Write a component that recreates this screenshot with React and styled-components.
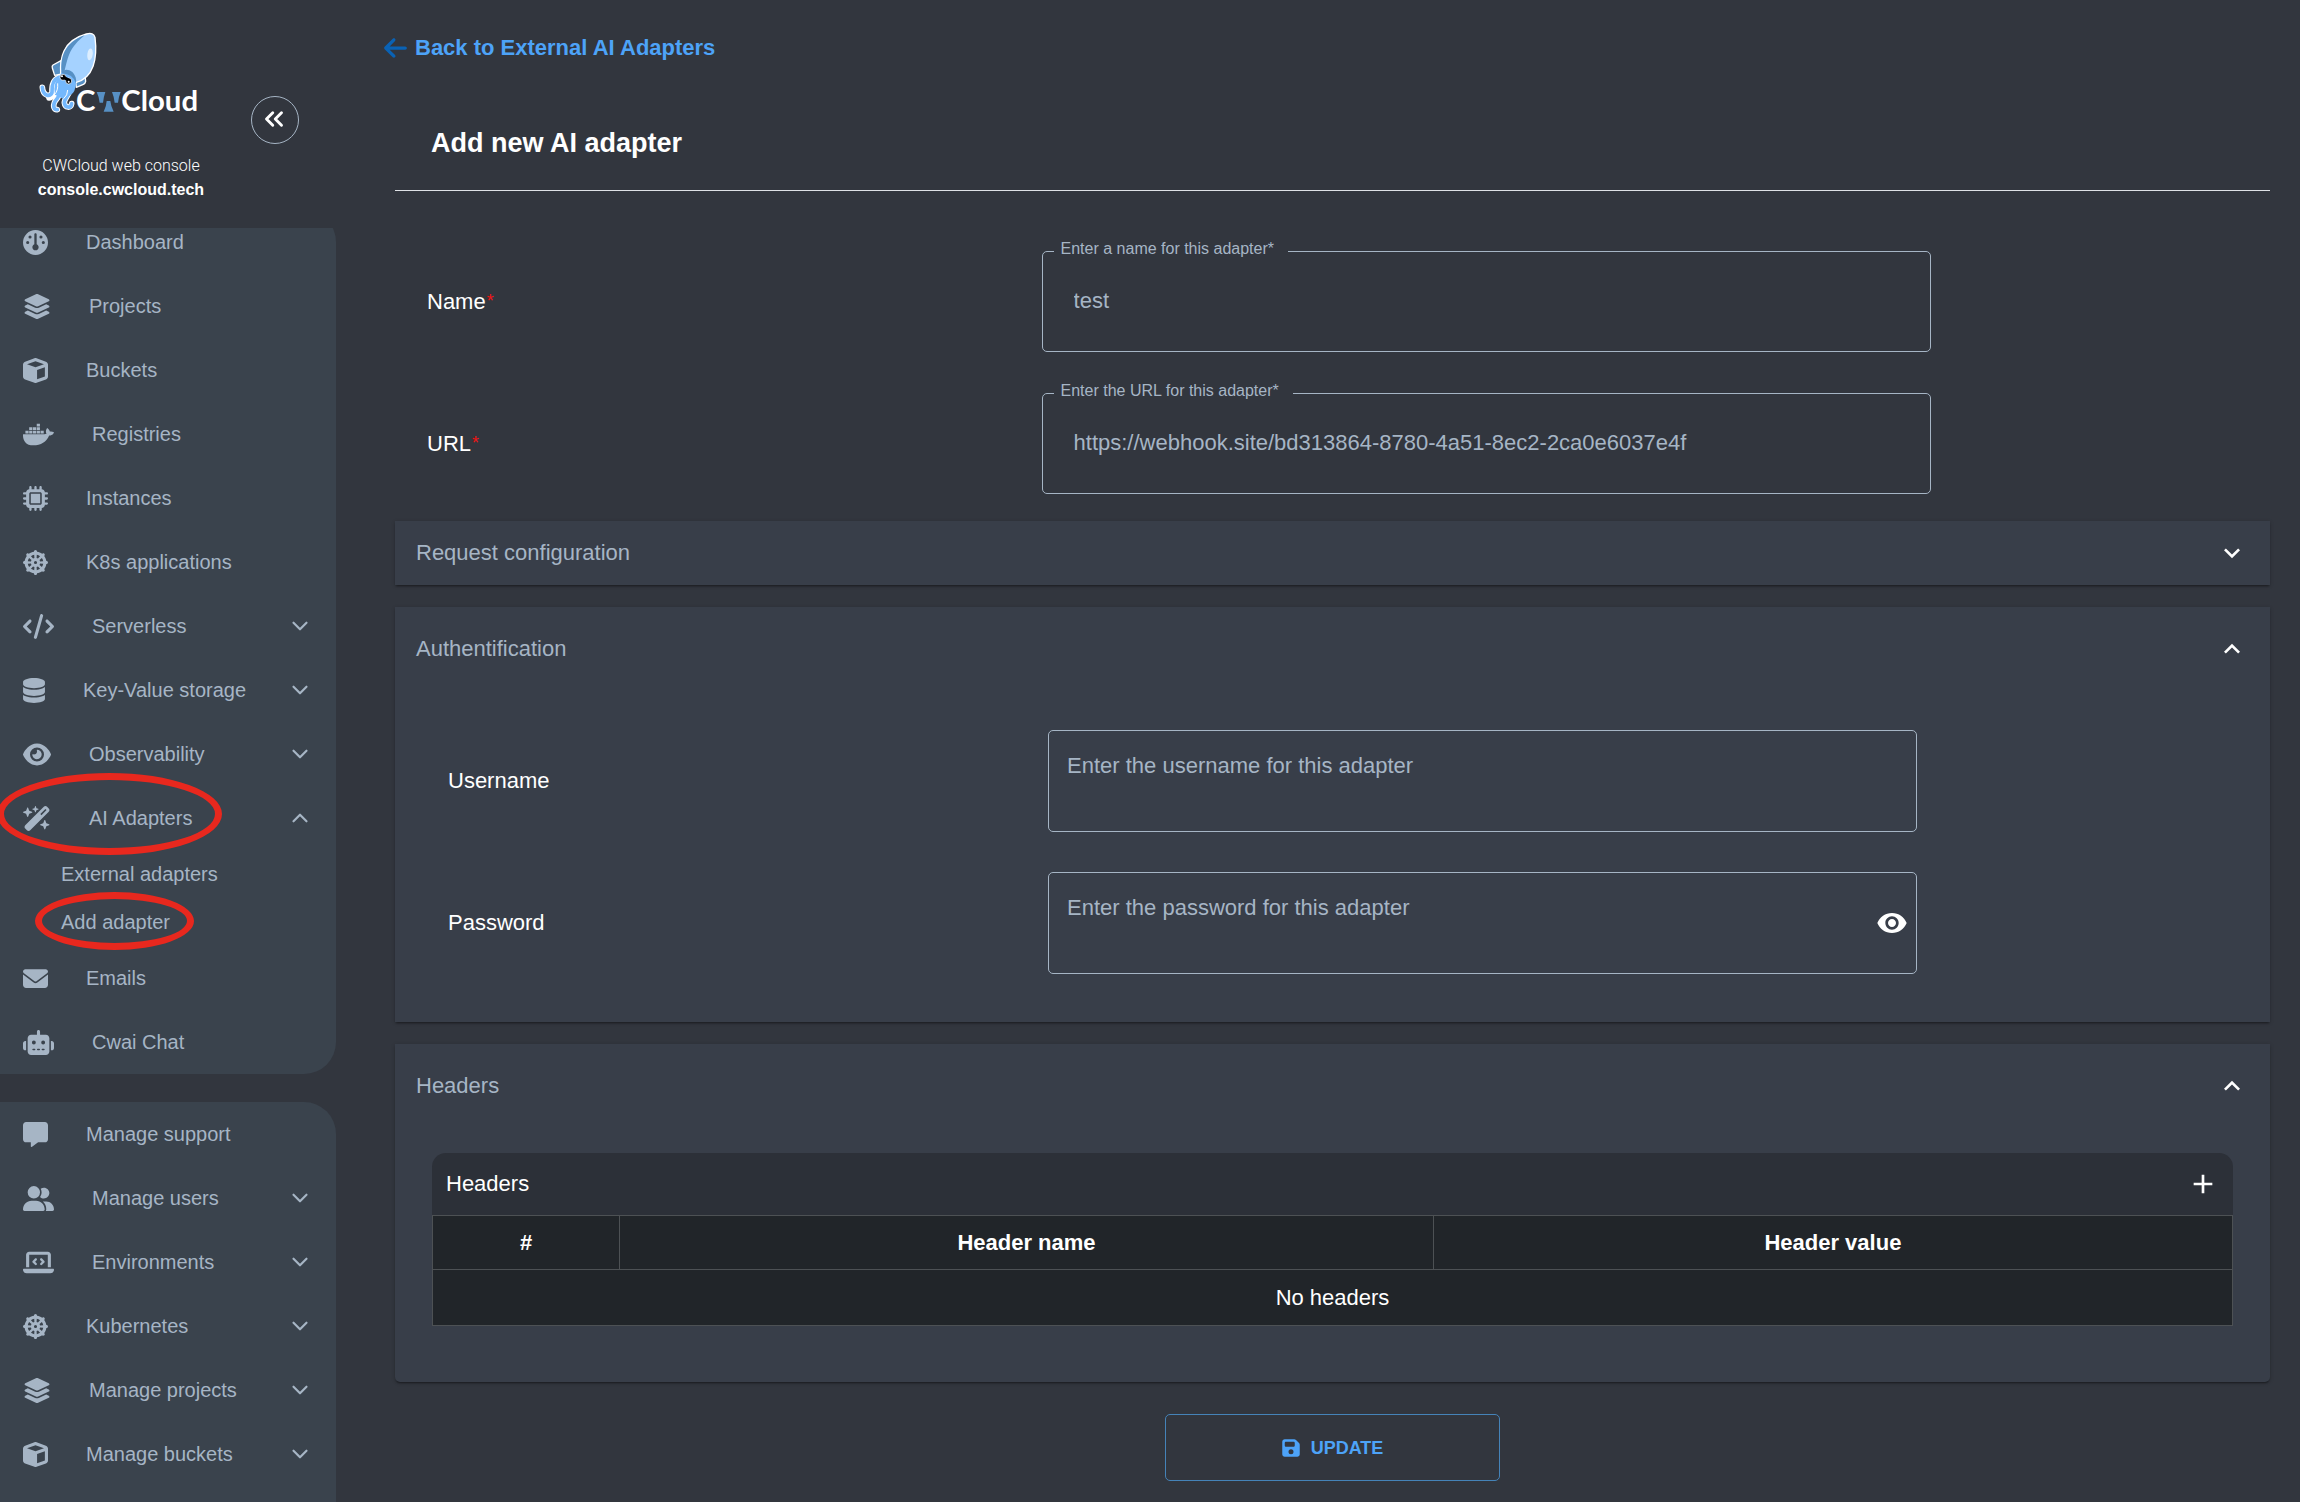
import { useState } from 'react';
import styled, { createGlobalStyle } from 'styled-components';
import {
  FaArrowLeft,
  FaCode,
  FaCube,
  FaDatabase,
  FaDharmachakra,
  FaDocker,
  FaEnvelope,
  FaEye,
  FaFloppyDisk,
  FaGauge,
  FaLaptopCode,
  FaLayerGroup,
  FaMessage,
  FaMicrochip,
  FaRobot,
  FaUserGroup,
  FaWandMagicSparkles,
} from 'react-icons/fa6';
import { MdAdd, MdExpandLess, MdExpandMore, MdVisibility } from 'react-icons/md';
import { ChevronDown, ChevronsLeft, ChevronUp } from 'lucide-react';

const userMenu = [
  { name: 'Dashboard', icon: FaGauge },
  { name: 'Projects', icon: FaLayerGroup, iconWidth: 28 },
  { name: 'Buckets', icon: FaCube },
  { name: 'Registries', icon: FaDocker, iconWidth: 31 },
  { name: 'Instances', icon: FaMicrochip },
  { name: 'K8s applications', icon: FaDharmachakra },
  { name: 'Serverless', icon: FaCode, iconWidth: 31, expandable: true },
  {
    name: 'Key-Value storage',
    icon: FaDatabase,
    iconWidth: 22,
    expandable: true,
  },
  { name: 'Observability', icon: FaEye, iconWidth: 28, expandable: true },
  {
    name: 'AI Adapters',
    icon: FaWandMagicSparkles,
    iconWidth: 28,
    expandable: true,
    marked: true,
    children: [
      { name: 'External adapters' },
      { name: 'Add adapter', marked: true },
    ],
  },
  { name: 'Emails', icon: FaEnvelope },
  { name: 'Cwai Chat', icon: FaRobot, iconWidth: 31 },
];

const adminMenu = [
  { name: 'Manage support', icon: FaMessage },
  { name: 'Manage users', icon: FaUserGroup, iconWidth: 31, expandable: true },
  { name: 'Environments', icon: FaLaptopCode, iconWidth: 31, expandable: true },
  { name: 'Kubernetes', icon: FaDharmachakra, expandable: true },
  {
    name: 'Manage projects',
    icon: FaLayerGroup,
    iconWidth: 28,
    expandable: true,
  },
  { name: 'Manage buckets', icon: FaCube, expandable: true },
];

export default function App() {
  const [openMenu, setOpenMenu] = useState('AI Adapters');

  return (
    <>
      <GlobalStyle />
      <Page>
        <Sidebar>
          <SidebarHead>
            <Brand>
              <Logo />
              <BrandText>
                <span>CWCloud web console</span>
                <strong>console.cwcloud.tech</strong>
              </BrandText>
            </Brand>
            <CollapseButton type="button" aria-label="Collapse menu">
              <ChevronsLeft size={30} strokeWidth={2.3} />
            </CollapseButton>
          </SidebarHead>
          <NavScroll>
            <Menu items={userMenu} openMenu={openMenu} onToggle={setOpenMenu} />
            <Menu
              items={adminMenu}
              openMenu={openMenu}
              onToggle={setOpenMenu}
              fill
            />
          </NavScroll>
        </Sidebar>
        <AdapterForm />
      </Page>
    </>
  );
}

function Menu({ items, openMenu, onToggle, fill }) {
  return (
    <MenuList $fill={fill}>
      {items.map(item => {
        const { name, icon, iconWidth = 25, expandable, marked } = item;
        const isOpen = openMenu === name;
        return (
          <li key={name}>
            {expandable ? (
              <MenuItem
                as="button"
                type="button"
                aria-expanded={isOpen}
                onClick={() => onToggle(isOpen ? '' : name)}
              >
                <MenuIcon as={icon} $width={iconWidth} />
                <span>{name}</span>
                <Arrow>
                  {isOpen ? <ChevronUp size={26} /> : <ChevronDown size={26} />}
                </Arrow>
                {marked && <MenuMark />}
              </MenuItem>
            ) : (
              <MenuItem href="#">
                <MenuIcon as={icon} $width={iconWidth} />
                <span>{name}</span>
              </MenuItem>
            )}
            {isOpen &&
              item.children?.map(child => (
                <SubItem key={child.name} href="#">
                  {child.name}
                  {child.marked && <SubMark />}
                </SubItem>
              ))}
          </li>
        );
      })}
    </MenuList>
  );
}

function AdapterForm() {
  const [name, setName] = useState('test');
  const [url, setUrl] = useState(
    'https://webhook.site/bd313864-8780-4a51-8ec2-2ca0e6037e4f'
  );
  const [username, setUsername] = useState('');
  const [password, setPassword] = useState('');
  const [showPassword, setShowPassword] = useState(false);

  return (
    <Main>
      <BackLink href="#">
        <FaArrowLeft />
        Back to External AI Adapters
      </BackLink>
      <Form onSubmit={e => e.preventDefault()}>
        <Title>Add new AI adapter</Title>
        <Fields>
          <Row>
            <Label htmlFor="name">
              Name<Required>*</Required>
            </Label>
            <Outline>
              <legend>Enter a name for this adapter*</legend>
              <input
                id="name"
                type="text"
                value={name}
                onChange={e => setName(e.target.value)}
              />
            </Outline>
          </Row>
          <Row>
            <Label htmlFor="url">
              URL<Required>*</Required>
            </Label>
            <Outline>
              <legend>Enter the URL for this adapter*</legend>
              <input
                id="url"
                type="text"
                value={url}
                onChange={e => setUrl(e.target.value)}
              />
            </Outline>
          </Row>
        </Fields>

        <Panels>
          <Panel>
            <PanelHead type="button" aria-expanded="false">
              Request configuration
              <MdExpandMore size={32} />
            </PanelHead>
          </Panel>

          <Panel>
            <PanelHead type="button" aria-expanded="true" $open>
              Authentification
              <MdExpandLess size={32} />
            </PanelHead>
            <AuthFields>
              <Row>
                <Label htmlFor="username">Username</Label>
                <PlainField>
                  <input
                    id="username"
                    type="text"
                    placeholder="Enter the username for this adapter"
                    value={username}
                    onChange={e => setUsername(e.target.value)}
                  />
                </PlainField>
              </Row>
              <Row>
                <Label htmlFor="password">Password</Label>
                <PlainField>
                  <input
                    id="password"
                    type={showPassword ? 'text' : 'password'}
                    placeholder="Enter the password for this adapter"
                    value={password}
                    onChange={e => setPassword(e.target.value)}
                  />
                  <IconButton
                    type="button"
                    aria-label="Show password"
                    onClick={() => setShowPassword(!showPassword)}
                  >
                    <MdVisibility size={32} />
                  </IconButton>
                </PlainField>
              </Row>
            </AuthFields>
          </Panel>

          <Panel>
            <PanelHead type="button" aria-expanded="true" $open>
              Headers
              <MdExpandLess size={32} />
            </PanelHead>
            <TableBox>
              <TableBar>
                Headers
                <IconButton type="button" aria-label="Add header">
                  <MdAdd size={32} />
                </IconButton>
              </TableBar>
              <Table>
                <colgroup>
                  <col width="10.4%" />
                  <col width="45.2%" />
                  <col width="44.4%" />
                </colgroup>
                <thead>
                  <tr>
                    <th>#</th>
                    <th>Header name</th>
                    <th>Header value</th>
                  </tr>
                </thead>
                <tbody>
                  <tr>
                    <td colSpan="3">No headers</td>
                  </tr>
                </tbody>
              </Table>
            </TableBox>
          </Panel>
        </Panels>

        <UpdateButton type="submit">
          <FaFloppyDisk />
          UPDATE
        </UpdateButton>
      </Form>
    </Main>
  );
}

function Logo() {
  return (
    <svg
      width="164"
      height="88"
      viewBox="120 96 492 264"
      role="img"
      aria-label="CWCloud"
    >
      {/* fins */}
      <g fill="#5790c4" stroke="#fff" strokeWidth="4" strokeLinejoin="round">
        <path d="M186 182 L162 195 Q158 198 160 204 L167 226 L188 222 Z" />
        <path d="M258 226 L260 244 Q259 250 253 253 L232 262 L230 244 Z" />
      </g>
      {/* tentacles */}
      <g fill="none" strokeLinecap="round" strokeLinejoin="round">
        <g stroke="#fff" strokeWidth="17">
          <path d="M180 232 C158 240 158 262 159 278 C152 292 132 288 130 262" />
          <path d="M190 250 C184 280 180 290 168 304 C160 320 166 330 175 329" />
          <path d="M214 262 C214 284 196 294 196 308 C198 324 216 326 218 311" />
          <path d="M172 262 C172 280 162 292 150 294" />
        </g>
        <g stroke="#74b8fd" strokeWidth="11">
          <path d="M180 232 C158 240 158 262 159 278 C152 292 132 288 130 262" />
          <path d="M190 250 C184 280 180 290 168 304 C160 320 166 330 175 329" />
          <path d="M214 262 C214 284 196 294 196 308 C198 324 216 326 218 311" />
        </g>
      </g>
      {/* mantle */}
      <path
        d="M185 222 C182 176 190 122 262 102 Q284 96 288 112 C296 176 284 234 230 248 Z"
        fill="#a5d2ff"
        stroke="#fff"
        strokeWidth="4"
      />
      <path
        d="M188 218 C184 178 192 128 258 105 C212 142 208 166 196 216 Z"
        fill="#5790c4"
      />
      <ellipse
        cx="273"
        cy="163"
        rx="8"
        ry="18"
        fill="#dceeff"
        transform="rotate(8 273 163)"
      />
      {/* head */}
      <path
        d="M184 224 Q190 210 208 212 Q232 220 231 248 Q230 276 214 286 L192 296 L168 284 Q160 250 184 224 Z"
        fill="#74b8fd"
      />
      <path
        d="M188 214 Q204 204 220 216 Q234 230 231 250 Q222 222 188 220 Z"
        fill="#5790c4"
      />
      <path
        d="M176 250 Q178 272 166 284 M206 270 Q206 286 194 296"
        fill="none"
        stroke="#fff"
        strokeWidth="3"
      />
      {/* eyes */}
      <circle cx="192" cy="232" r="9" fill="#000" stroke="#fff" strokeWidth="2" />
      <circle cx="209" cy="243" r="9" fill="#000" stroke="#fff" strokeWidth="2" />
      <path d="M190 230 L212 242" stroke="#000" strokeWidth="9" />
      <circle cx="189" cy="229" r="3" fill="#fff" />
      <circle cx="209" cy="245" r="3" fill="#fff" />
      {/* word mark */}
      <LogoText x="231" y="334">
        C
      </LogoText>
      <g fill="#5790c4">
        <path d="M293 276 H319 Q314 290 312 308 H302 Q300 290 293 276 Z" />
        <path d="M339 276 H365 Q359 290 357 308 H347 Q345 290 339 276 Z" />
        <path d="M314 335 Q322 320 323 303 H334 Q336 320 344 335 Z" />
      </g>
      <LogoText x="367" y="334">
        Cloud
      </LogoText>
    </svg>
  );
}

const GlobalStyle = createGlobalStyle`
  * {
    box-sizing: border-box;
  }

  body {
    margin: 0;
    background-color: #32363e;
    color: #fff;
    font-family: 'Liberation Sans', Arial, sans-serif;
    font-size: 22px;
    line-height: 26px;
  }

  button,
  input {
    font: inherit;
    color: inherit;
  }

  button {
    cursor: pointer;
  }
`;

const Page = styled.div`
  display: flex;
  height: 100vh;
  overflow: hidden;
`;

const Sidebar = styled.aside`
  flex: 0 0 336px;
  display: flex;
  flex-direction: column;
`;

const SidebarHead = styled.header`
  display: flex;
  gap: 9px;
  padding-bottom: 26px;
`;

const Brand = styled.div`
  width: 242px;
  padding-top: 32px;
  display: flex;
  flex-direction: column;
  align-items: center;
  gap: 34px;
`;

const BrandText = styled.div`
  display: flex;
  flex-direction: column;
  align-items: center;
  font-size: 16px;
  line-height: 24px;

  span {
    font-family: Roboto, sans-serif;
    font-weight: 300;
  }
`;

const LogoText = styled.text`
  font-family: Lato, sans-serif;
  font-size: 88px;
  font-weight: 700;
  fill: #fff;
`;

const CollapseButton = styled.button`
  width: 48px;
  height: 48px;
  margin-top: 96px;
  padding: 0 2px 2px 0;
  display: grid;
  place-items: center;
  background: none;
  border: 1px solid #a6b5c5;
  border-radius: 50%;
`;

const NavScroll = styled.nav`
  flex: 1;
  min-height: 0;
  display: flex;
  flex-direction: column;
  gap: 28px;
  overflow: hidden;
`;

const MenuList = styled.ul`
  flex: ${({ $fill }) => ($fill ? '1 0 auto' : 'none')};
  margin: 0;
  padding: 0;
  list-style: none;
  color: #a6b5c5;
  background-color: #3a434d;
  border-radius: ${({ $fill }) => ($fill ? '0 32px 0 0' : '0 32px 32px 0')};

  /* the list rests slightly scrolled under the header */
  &:first-child {
    margin-top: -18px;
  }
`;

const MenuItem = styled.a`
  position: relative;
  width: 100%;
  height: 64px;
  padding: 0 23px;
  display: flex;
  align-items: center;
  gap: 38px;
  font-size: 20px;
  text-align: left;
  text-decoration: none;
  color: inherit;
  background: none;
  border: none;
`;

const MenuIcon = styled.svg`
  flex: none;
  width: ${({ $width }) => $width}px;
  height: 25px;
`;

const Arrow = styled.span`
  margin-left: auto;
  display: flex;
`;

const SubItem = styled.a`
  position: relative;
  height: 48px;
  padding-left: 61px;
  display: flex;
  align-items: center;
  font-size: 20px;
  text-decoration: none;
  color: inherit;
`;

const Mark = styled.i`
  position: absolute;
  border: 7px solid #e8281e;
  border-radius: 50%;
  pointer-events: none;
`;

const MenuMark = styled(Mark)`
  top: -13px;
  left: -3px;
  width: 225px;
  height: 82px;
`;

const SubMark = styled(Mark)`
  top: -6px;
  left: 35px;
  width: 159px;
  height: 58px;
`;

const Main = styled.main`
  flex: 1;
  min-width: 0;
  padding: 35px 30px 0 48px;
`;

const BackLink = styled.a`
  width: fit-content;
  display: flex;
  align-items: center;
  gap: 8px;
  font-weight: bold;
  text-decoration: none;
  color: #4da3f8;

  svg {
    width: 23px;
    height: 26px;
    color: #0a62b4;
  }
`;

const Form = styled.form`
  margin-left: 11px;
  display: flex;
  flex-direction: column;
`;

const Title = styled.h1`
  margin: 66px 0 0;
  padding: 0 36px 31px;
  font-size: 27px;
  line-height: 32px;
  border-bottom: 1px solid #dfe2e6;
`;

const Fields = styled.div`
  padding: 59px 0 27px;
  display: grid;
  gap: 40px;
`;

const Row = styled.div`
  display: grid;
  grid-template-columns: 40fr 55fr 21fr;
  align-items: center;
`;

const Label = styled.label`
  padding-left: 32px;
`;

const Required = styled.span`
  margin-left: 1px;
  font-size: 18px;
  vertical-align: 2px;
  color: #f01414;
`;

const Outline = styled.fieldset`
  min-width: 0;
  height: 112px;
  margin: -10px 0 0;
  padding: 0 18px 0 11px;
  border: 1px solid #a6b5c5;
  border-radius: 5px;

  legend {
    padding: 0 14px 4px 7px;
    font-size: 16px;
    line-height: 18px;
    color: #a6b5c5;
  }

  input {
    width: 100%;
    height: 77px;
    padding: 0 20px;
    background: none;
    border: none;
    outline: none;
    color: #a6b5c5;
  }
`;

const Panels = styled.div`
  display: grid;
  gap: 22px;
`;

const Panel = styled.section`
  background-color: #383e49;
  box-shadow: 0 2px 2px -1px rgba(0, 0, 0, 0.4), 0 1px 4px rgba(0, 0, 0, 0.2);

  &:last-child {
    border-radius: 0 0 5px 5px;
  }
`;

const PanelHead = styled.button`
  width: 100%;
  height: ${({ $open }) => ($open ? 84 : 64)}px;
  padding: 0 22px 0 21px;
  display: flex;
  align-items: center;
  justify-content: space-between;
  color: #a6b5c5;
  background: none;
  border: none;

  svg {
    color: #fff;
  }
`;

const AuthFields = styled.div`
  padding: 39px 21px 48px;
  display: grid;
  gap: 40px;
`;

const PlainField = styled.div`
  height: 102px;
  padding-right: 8px;
  display: flex;
  align-items: center;
  border: 1px solid #a6b5c5;
  border-radius: 5px;

  input {
    flex: 1;
    min-width: 0;
    height: 100px;
    padding: 0 18px 30px;
    background: none;
    border: none;
    outline: none;
  }

  input::placeholder {
    color: #a6b5c5;
    opacity: 1;
  }
`;

const IconButton = styled.button`
  padding: 0;
  display: flex;
  background: none;
  border: none;
`;

const TableBox = styled.div`
  padding: 25px 37px 56px;
`;

const TableBar = styled.div`
  height: 62px;
  padding: 0 14px;
  display: flex;
  align-items: center;
  justify-content: space-between;
  background-color: #2c3038;
  border-radius: 14px 14px 0 0;
`;

const Table = styled.table`
  width: 100%;
  table-layout: fixed;
  border-collapse: collapse;
  text-align: center;
  background-color: #212529;

  th,
  td {
    height: 54px;
    padding: 0;
    border: 1px solid #4d5154;
  }

  td {
    height: 56px;
  }
`;

const UpdateButton = styled.button`
  align-self: center;
  width: 335px;
  height: 67px;
  margin-top: 32px;
  display: flex;
  align-items: center;
  justify-content: center;
  gap: 11px;
  font-size: 18px;
  font-weight: bold;
  color: #4da3f8;
  background: none;
  border: 1px solid #4583b8;
  border-radius: 5px;

  svg {
    width: 18px;
    height: 20px;
  }
`;
